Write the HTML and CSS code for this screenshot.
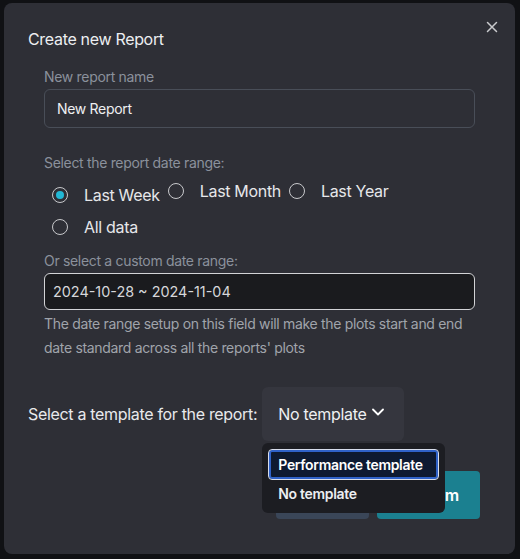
FILE: index.html
```html
<!DOCTYPE html>
<html lang="en">
<head>
<meta charset="utf-8">
<title>Create new Report</title>
<link rel="stylesheet" href="styles.css">
</head>
<body>
<div class="modal">
  <button class="close" aria-label="Close">
    <svg width="12" height="12" viewBox="0 0 12 12"><path d="M1.5 1.5L10.5 10.5M10.5 1.5L1.5 10.5" stroke="#c9cacd" stroke-width="1.5" stroke-linecap="round"/></svg>
  </button>
  <h2 class="title">Create new Report</h2>
  <div class="content">
    <div class="label first">New report name</div>
    <div class="input">New Report</div>

    <div class="label gap">Select the report date range:</div>
    <div class="radios">
      <div class="radio-row">
        <div class="radio checked-item"><span class="circle checked"></span><span>Last Week</span></div>
        <div class="radio"><span class="circle"></span><span>Last Month</span></div>
        <div class="radio"><span class="circle"></span><span>Last Year</span></div>
      </div>
      <div class="radio-row">
        <div class="radio"><span class="circle"></span><span>All data</span></div>
      </div>
    </div>

    <div class="label custom">Or select a custom date range:</div>
    <div class="date-input">2024-10-28 ~ 2024-11-04</div>
    <p class="help">The date range setup on this field will make the plots start and end date standard across all the reports' plots</p>
  </div>

  <div class="template-row">
    <span class="template-label">Select a template for the report:</span>
    <div class="select-wrap">
      <div class="select-btn">
        <span>No template</span>
        <svg width="12" height="8" viewBox="0 0 12 8"><polyline points="1,1.5 6,6.5 11,1.5" fill="none" stroke="#ffffff" stroke-width="1.8" stroke-linecap="round" stroke-linejoin="round"/></svg>
      </div>
      <div class="menu">
        <div class="menu-item active">Performance template</div>
        <div class="menu-item">No template</div>
      </div>
    </div>
  </div>

  <div class="footer">
    <button class="btn cancel">Cancel</button>
    <button class="btn confirm">Confirm</button>
  </div>
</div>
</body>
</html>
```

FILE: styles.css
```css
html, body {
  margin: 0;
  padding: 0;
  background: #101114;
  font-family: Inter, "Noto Sans", "Liberation Sans", sans-serif;
  letter-spacing: -0.02em;
}

.modal {
  position: relative;
  box-sizing: border-box;
  margin: 3px 0 0 4px;
  width: 511px;
  height: 551px;
  padding: 24px 24px 0 24px;
  background: #2e2f36;
  border-radius: 8px;
}

.close {
  position: absolute;
  top: 18px;
  left: 482px;
  width: 12px;
  height: 12px;
  padding: 0;
  border: none;
  background: none;
  display: flex;
}

.title {
  margin: 0;
  font-size: 16px;
  line-height: 24px;
  font-weight: 400;
  color: #eceef1;
}

.content {
  padding: 0 16px;
}

.label {
  font-size: 14px;
  line-height: 20px;
  color: #8b919c;
}
.label.first { margin-top: 16px; }
.label.gap { margin-top: 25px; }
.label.custom { margin-top: 12px; }

.input {
  box-sizing: border-box;
  margin-top: 2px;
  height: 39px;
  padding: 0 12px;
  display: flex;
  align-items: center;
  border: 1px solid #494e58;
  border-radius: 6px;
  font-size: 14px;
  color: #eef0f2;
}

.radios {
  margin-top: 6px;
  display: flex;
  flex-direction: column;
  gap: 8px;
}

.radio-row {
  display: flex;
  align-items: flex-start;
  gap: 0;
}

.radio {
  display: flex;
  align-items: center;
  gap: 16px;
  padding-left: 8px;
  height: 24px;
  font-size: 16px;
  color: #e6e7ea;
}
.radio.checked-item { margin-top: 4px; }

.circle {
  box-sizing: border-box;
  width: 16px;
  height: 16px;
  border-radius: 50%;
  border: 1.5px solid #c8c9cc;
  display: flex;
  align-items: center;
  justify-content: center;
  flex: none;
}
.circle.checked::after {
  content: "";
  width: 8px;
  height: 8px;
  border-radius: 50%;
  background: #22b8d6;
}

.date-input {
  box-sizing: border-box;
  margin-top: 2px;
  height: 37px;
  padding: 0 8px;
  display: flex;
  align-items: center;
  background: #1a1b1e;
  border: 1px solid #d2d3d6;
  border-radius: 6px;
  font-size: 14.4px;
  letter-spacing: 0;
  color: #d6d7da;
}

.help {
  margin: 2px 0 0 0;
  font-size: 14px;
  line-height: 24px;
  color: #a0a4ab;
}

.template-row {
  margin-top: 27px;
  display: flex;
  align-items: center;
  gap: 5px;
}

.template-label {
  font-size: 16px;
  color: #e8e9ec;
  white-space: nowrap;
}

.select-wrap {
  position: relative;
}

.select-btn {
  box-sizing: border-box;
  height: 54px;
  padding: 0 20px 0 16px;
  display: flex;
  align-items: center;
  gap: 6px;
  background: #35363e;
  border-radius: 6px;
  font-size: 16px;
  color: #eef0f2;
  white-space: nowrap;
}
.select-btn svg { margin-top: -4px; }

.menu {
  position: absolute;
  z-index: 2;
  top: 56px;
  left: 0;
  box-sizing: border-box;
  width: 183px;
  padding: 6px;
  background: #1c1d22;
  border-radius: 6px;
}

.menu-item {
  box-sizing: border-box;
  height: 27px;
  padding: 0 10px;
  display: flex;
  align-items: center;
  font-size: 14px;
  font-weight: 600;
  color: #eceef1;
  border-radius: 4px;
  white-space: nowrap;
}
.menu-item.active {
  height: 31px;
  padding-left: 9px;
  background: #0e1a31;
  border: 1px solid #d7ddeb;
  box-shadow: inset 0 0 0 2px #2f62c9;
  color: #ffffff;
}

.footer {
  margin-top: 30px;
  margin-right: 11px;
  display: flex;
  justify-content: flex-end;
  gap: 8px;
}

.btn {
  height: 48px;
  border: none;
  border-radius: 4px;
  font-family: inherit;
  letter-spacing: inherit;
  font-size: 16px;
  font-weight: 600;
  color: #ffffff;
}
.btn.cancel {
  width: 93px;
  background: #3a4658;
}
.btn.confirm {
  width: 103px;
  background: #1b8090;
}
```
